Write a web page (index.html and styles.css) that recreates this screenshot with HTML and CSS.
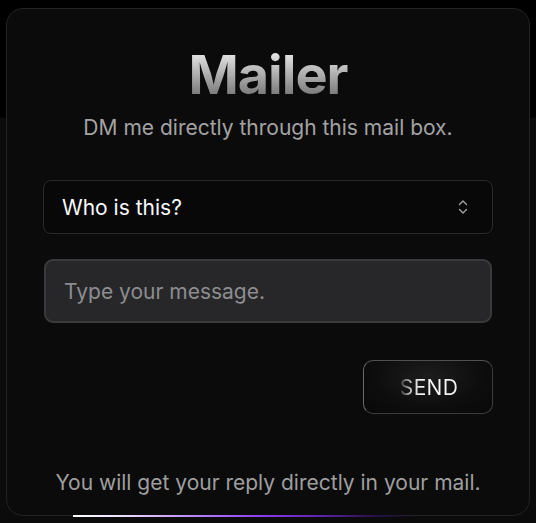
FILE: index.html
```html
<!DOCTYPE html>
<html lang="en">
<head>
<meta charset="utf-8">
<title>Mailer</title>
<link rel="stylesheet" href="styles.css">
</head>
<body>
<div class="page">
  <main class="card">
    <h1 class="title">Mailer</h1>
    <p class="subtitle">DM me directly through this mail box.</p>
    <form class="form">
      <div class="select">
        <span class="select-label">Who is this?</span>
        <svg class="chevrons" width="10" height="16" viewBox="0 0 10 16" fill="none" stroke="#a3a3a3" stroke-width="1.4" stroke-linecap="round" stroke-linejoin="round">
          <path d="M1.5 5.5 L5 2 L8.5 5.5"/>
          <path d="M1.5 10.5 L5 14 L8.5 10.5"/>
        </svg>
      </div>
      <div class="message">Type your message.</div>
      <div class="actions">
        <button type="button" class="send"><span class="send-text">SEND</span></button>
      </div>
    </form>
    <p class="footer">You will get your reply directly in your mail.</p>
    <div class="glow-line"></div>
  </main>
</div>
</body>
</html>
```
FILE: styles.css
```css
* { box-sizing: border-box; }
html, body { margin: 0; padding: 0; }
body {
  width: 536px;
  height: 523px;
  overflow: hidden;
  background: linear-gradient(to bottom, #000 0, #000 118px, #0b0b0b 118px, #0b0b0b 100%);
  font-family: Inter, "Noto Sans", sans-serif;
}
.page {
  padding: 8px 6px 0 6px;
}
.card {
  position: relative;
  width: 524px;
  height: 508px;
  background: #0b0b0b;
  border: 1px solid #232323;
  border-radius: 17px;
  padding: 39px 36px 0 36px;
  display: flex;
  flex-direction: column;
  align-items: center;
}
.title {
  margin: 0;
  font-size: 54px;
  line-height: 54px;
  font-weight: 700;
  letter-spacing: -1px;
  background: linear-gradient(to bottom, #e4e4e4 10%, #6f6f6f 95%);
  -webkit-background-clip: text;
  background-clip: text;
  color: transparent;
}
.subtitle {
  margin: 12px 0 0 0;
  font-size: 21px;
  line-height: 28px;
  color: #a3a3a3;
}
.form {
  width: 450px;
  margin-top: 38px;
  display: flex;
  flex-direction: column;
}
.select {
  height: 54px;
  border: 1px solid #2a2a2a;
  border-radius: 8px;
  background: #080808;
  display: flex;
  align-items: center;
  justify-content: space-between;
  padding: 0 24px 0 18px;
}
.select-label {
  color: #fafafa;
  font-size: 21px;
  font-weight: 400;
}
.chevrons { display: block; }
.message {
  margin: 25px 1px 0 1px;
  height: 64px;
  background: #27272a;
  border: 2px solid #3a3a3c;
  border-radius: 9px;
  padding: 0 18px;
  display: flex;
  align-items: center;
  color: #8d8d8f;
  font-size: 21px;
}
.actions {
  display: flex;
  justify-content: flex-end;
  margin-top: 37px;
}
.send {
  width: 130px;
  height: 54px;
  border-radius: 10px;
  border: 1px solid #3c3c3c;
  border-top-color: #505050;
  border-left-color: #6a6a6a;
  background: radial-gradient(ellipse at 50% 30%, #1d1d1d 0%, #0d0d0d 60%, #080808 100%);
  font-family: Inter, "Noto Sans", sans-serif;
  font-size: 21px;
  letter-spacing: 0.3px;
  padding: 0;
  display: flex;
  align-items: center;
  justify-content: center;
  cursor: pointer;
}
.send-text {
  background: linear-gradient(to right, #1a1a1a 0px, #bdbdbd 12px, #f5f5f5 24px, #f5f5f5 100%);
  -webkit-background-clip: text;
  background-clip: text;
  color: transparent;
  padding-left: 2px;
}
.footer {
  margin: 55px 0 0 0;
  font-size: 21px;
  line-height: 28px;
  color: #9f9f9f;
}
.glow-line {
  position: absolute;
  left: 66px;
  bottom: -2px;
  width: 345px;
  height: 2px;
  background: linear-gradient(to right, #ffffff 0%, #ecdcff 15%, #b07af7 38%, #8b3cf0 55%, #5b23a8 72%, #241040 88%, rgba(20,20,20,0) 100%);
}
```
